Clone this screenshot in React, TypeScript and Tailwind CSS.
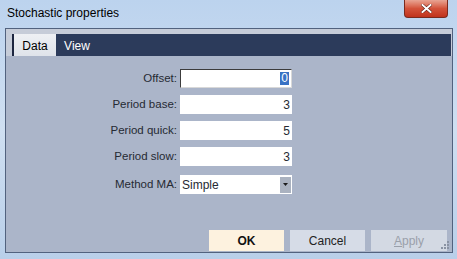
import React from "react";

export default function App() {
  const font = { fontFamily: '"Liberation Sans", Arial, sans-serif' };
  const rows = [
    { label: "Offset:", value: "0", focused: true },
    { label: "Period base:", value: "3" },
    { label: "Period quick:", value: "5" },
    { label: "Period slow:", value: "3" },
  ];
  return (
    <div
      className="relative w-[457px] h-[259px] overflow-hidden flex flex-col bg-gradient-to-b from-[#bcd3ee] via-[#cfdff1] to-[#b9cfe9]"
      style={font}
    >
      {/* title bar */}
      <div className="h-[28px] flex items-center pl-[7px] pb-[2px] text-[12px] text-black">
        Stochastic properties
      </div>
      <div className="absolute top-0 right-[9px] w-[44px] h-[18px] rounded-b-[4px] border border-t-0 border-[#7a2a1e] bg-gradient-to-b from-[#e8a493] via-[#d3523a] to-[#c0321c] flex items-center justify-center">
        <svg width="11" height="9" viewBox="0 0 11 9">
          <path d="M1.5 1 L9.5 8 M9.5 1 L1.5 8" stroke="#5a1a10" strokeWidth="3" strokeLinecap="square" />
          <path d="M1.5 1 L9.5 8 M9.5 1 L1.5 8" stroke="#ffffff" strokeWidth="2" strokeLinecap="square" />
        </svg>
      </div>

      {/* client area */}
      <div className="ml-[5px] w-[448px] h-[225px] border border-[#52627e] bg-[#abb5c9] flex flex-col">
        {/* tab strip */}
        <div className="bg-[#c6ccd8] pt-[5px] pl-[6px] pr-[1px]">
          <div className="h-[22px] bg-[#2c3b5b] border-l-2 border-[#1d2640] flex items-stretch text-[12px]">
            <div className="w-[42px] bg-gradient-to-b from-[#eef0f4] to-[#dfe3ea] text-black flex items-center justify-center pt-[1px]">
              Data
            </div>
            <div className="w-[42px] text-white flex items-center justify-center pt-[1px]">View</div>
          </div>
        </div>

        {/* form */}
        <div className="flex-1 flex flex-col">
          <div className="pt-[13px] grid grid-cols-[171px_112px] gap-x-[3px] gap-y-[7px] text-[11.5px] text-[#262a33]">
            {rows.map((r) => (
              <React.Fragment key={r.label}>
                <div className="h-[19px] flex items-center justify-end">{r.label}</div>
                <div
                  className={
                    "h-[19px] bg-white flex items-center justify-end pr-[2px] text-[12px] " +
                    (r.focused ? "border border-[#3c3c3c] border-b-[#d8d8d8] border-r-[#d8d8d8]" : "")
                  }
                >
                  {r.focused ? (
                    <span className="bg-[#3a72c4] text-white px-[1px] leading-[13px]">{r.value}</span>
                  ) : (
                    <span>{r.value}</span>
                  )}
                </div>
              </React.Fragment>
            ))}
            <div className="h-[19px] mt-[2px] flex items-center justify-end">Method MA:</div>
            <div className="h-[19px] mt-[2px] bg-white flex items-center justify-between pl-[2px] pr-[1px] text-[12px]">
              <span>Simple</span>
              <div className="w-[11px] h-[16px] bg-[#aab2c0] flex items-center justify-center">
                <svg width="5" height="3" viewBox="0 0 5 3">
                  <path d="M0 0 H5 L2.5 3 Z" fill="#1a1a1a" />
                </svg>
              </div>
            </div>
          </div>

          {/* buttons */}
          <div className="mt-auto mb-[1px] flex justify-end gap-[6px] pr-[5px] text-[12px]">
            <div className="w-[75px] h-[21px] bg-[#fdf2df] flex items-center justify-center font-bold text-[#111]">
              OK
            </div>
            <div className="w-[75px] h-[21px] bg-[#d6dce7] flex items-center justify-center text-[#222]">
              Cancel
            </div>
            <div className="w-[76px] h-[21px] bg-[#d3d9e3] flex items-center justify-center text-[#9aa0aa]">
              <span>
                <span className="underline">A</span>pply
              </span>
            </div>
          </div>
        </div>
      </div>
      {/* resize grip */}
      <div className="absolute left-[441px] top-[241px] grid grid-cols-3 gap-[1px]">
        {[0, 0, 1, 0, 1, 1, 1, 1, 1].map((v, i) => (
          <div key={i} className={"w-[2px] h-[2px] " + (v ? "bg-[#8a93a3]" : "bg-transparent")} />
        ))}
      </div>
    </div>
  );
}
